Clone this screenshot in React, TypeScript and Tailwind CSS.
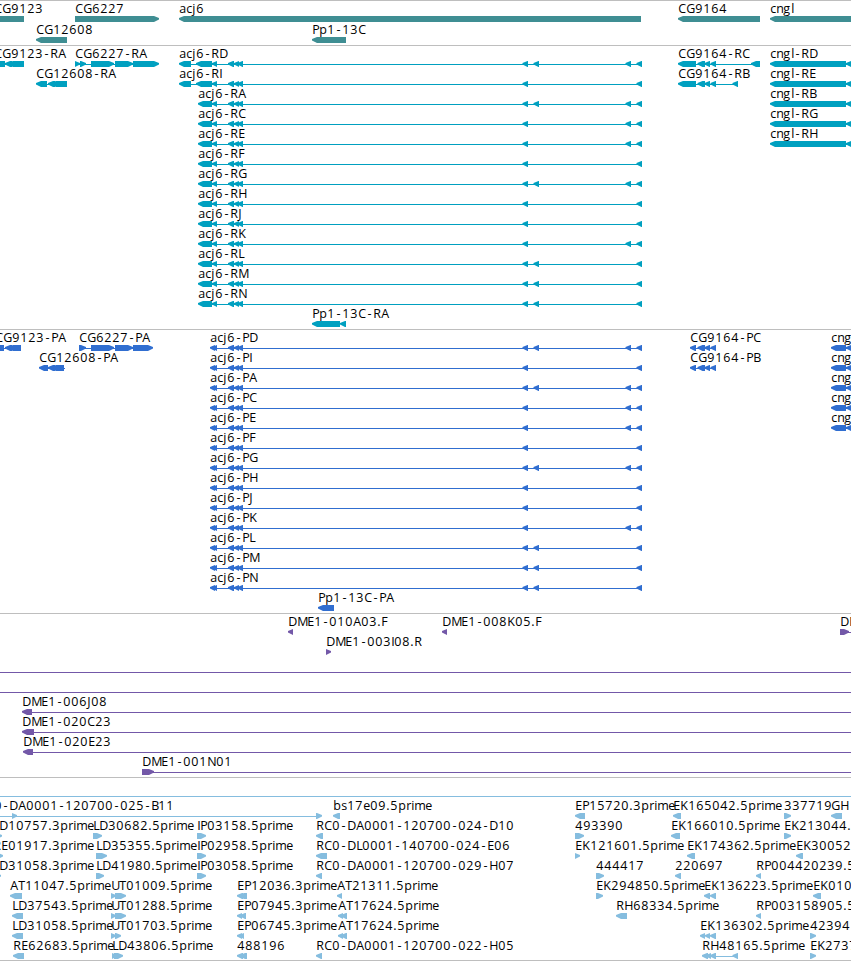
import React from 'react';

type Dir = 'l' | 'r';

interface Feature {
  label?: string;
  x: number; // label origin
  dir?: Dir;
  exons?: number[][]; // [start, end]
  line?: number[];
}

const WIDTH = 851;

// Advance widths of the label font
const ADVANCE: Record<string, number> = {
  a: 7, b: 8, c: 6, e: 7, g: 8, i: 3, j: 4, l: 3, m: 11, n: 7, p: 8, r: 5, s: 6,
  A: 8, B: 7, C: 8, D: 9, E: 7, F: 7, G: 9, H: 9, I: 3, J: 4, K: 8, L: 6, M: 10,
  N: 9, P: 7, R: 8, T: 7, U: 8, '-': 7, '.': 4,
};

const glyphPositions = (text: string, start: number) => {
  let x = start;
  return text
    .split('')
    .map((ch) => {
      const at = ch === '-' ? x + 1.5 : x + 0.3;
      x += ADVANCE[ch] ?? 8;
      return at;
    })
    .join(' ');
};

const exonPoints = (s: number, e: number, dir: Dir) => {
  const head = Math.min(5, e - s);
  return dir === 'l'
    ? `${s},17 ${s + head},15 ${e},15 ${e},21 ${s + head},21 ${s},18.5`
    : `${e},17 ${e - head},15 ${s},15 ${s},21 ${e - head},21 ${e},18.5`;
};

const Row = ({ items, height = 20 }: { items: Feature[]; height?: number }) => (
  <svg width={WIDTH} height={height} className="block shrink-0 overflow-visible">
    {items.map((f, i) => (
      <g key={i}>
        {f.line && <rect x={f.line[0]} y={18} width={f.line[1] - f.line[0]} height={1} fill="currentColor" />}
        {f.exons?.map(([s, e], j) => (
          <polygon key={j} points={exonPoints(s, e, f.dir ?? 'l')} fill="currentColor" />
        ))}
        {f.label && (
          <text x={glyphPositions(f.label, f.x)} y={12} className="fill-black">
            {f.label}
          </text>
        )}
      </g>
    ))}
  </svg>
);

const f = (label: string, x: number, dir: Dir, exons: number[][], line?: number[]): Feature => ({ label, x, dir, exons, line });

// Right-hand exons of each acj6 isoform
const A = [522.5, 528];
const B = [533.5, 539];
const C = [625.5, 631];
const D = [636.5, 642];
const acj6Isoforms: [string, number[][]][] = [
  ['D', [A, B, C, D]],
  ['I', [A, D]],
  ['A', [A, B, C, D]],
  ['C', [A, C, D]],
  ['E', [A, C, D]],
  ['F', [A, D]],
  ['G', [A, B, C, D]],
  ['H', [A, D]],
  ['J', [A, D]],
  ['K', [A, C, D]],
  ['L', [A, B, D]],
  ['M', [A, B, D]],
  ['N', [A, B, D]],
];
const acj6Inner = [[228, 234], [234, 239], [237.5, 243]];
const cg9164Inner = [[697.5, 705], [704.5, 710], [710.5, 716]];

const genes: Feature[][] = [
  [
    f('CG9123', -6, 'l', [[-20, 24]]),
    f('CG6227', 75, 'r', [[75, 159]]),
    f('acj6', 179, 'l', [[179, 641]]),
    f('CG9164', 678, 'l', [[678, 760]]),
    f('cngl', 770, 'l', [[770, 900]]),
  ],
  [f('CG12608', 36, 'l', [[36, 67]]), f('Pp1-13C', 312, 'l', [[312, 346]])],
];

const transcripts: Feature[][] = acj6Isoforms.map(([id, right], i) => {
  const start = i < 2 ? 179 : 198;
  const left = i < 2 ? [[179, 191], [196, 212], [212, 217]] : [[198, 212], [212, 217]];
  return [f('acj6-R' + id, start, 'l', [...left, ...acj6Inner, ...right], [start + 3, 640])];
});
transcripts[0].unshift(
  f('CG9123-RA', -6, 'l', [[-20, 5], [5, 12], [8, 24]], [0, 20]),
  f('CG6227-RA', 75, 'r', [[75, 80], [80, 86], [91, 114], [115, 133], [133, 159]], [75, 155]),
);
transcripts[0].push(f('CG9164-RC', 678, 'l', [[678, 696], ...cg9164Inner, [751, 760]], [680, 758]));
transcripts[1].unshift(f('CG12608-RA', 36, 'l', [[36, 47], [48, 55], [51, 67]], [40, 60]));
transcripts[1].push(f('CG9164-RB', 678, 'l', [[678, 696], ...cg9164Inner, [732.5, 738]], [680, 737]));
['D', 'E', 'B', 'G', 'H'].forEach((id, i) => {
  transcripts[i].push(f('cngl-R' + id, 770, 'l', [[770, 846], [846, 856]], [800, 851]));
});
transcripts.push([f('Pp1-13C-RA', 312, 'l', [[312, 340], [340, 346]])]);

const proteins: Feature[][] = acj6Isoforms.map(([id, right]) => [
  f('acj6-P' + id, 210, 'l', [[210, 215], [212, 217], ...acj6Inner, ...right], [213, 640]),
]);
proteins[0].unshift(
  f('CG9123-PA', -5, 'l', [[-20, 4], [5, 12], [8, 21]], [0, 20]),
  f('CG6227-PA', 79, 'r', [[79, 86], [91, 114], [115, 133], [133, 153]], [80, 150]),
);
proteins[0].push(f('CG9164-PC', 690, 'l', [[690, 696], ...cg9164Inner], [692, 715]));
proteins[1].unshift(f('CG12608-PA', 39, 'l', [[39, 48], [48, 55], [51, 64]], [40, 65]));
proteins[1].push(f('CG9164-PB', 690, 'l', [[690, 696], ...cg9164Inner], [692, 715]));
['D', 'E', 'B', 'G', 'H'].forEach((id, i) => {
  proteins[i].push(f('cngl-P' + id, 831, 'l', [[831, 846], [846, 856]], [835, 851]));
});
proteins.push([f('Pp1-13C-PA', 318, 'l', [[318, 334]])]);

const bacs: Feature[][] = [
  [
    f('DME1-010A03.F', 288, 'l', [[288, 293]]),
    f('DME1-008K05.F', 442, 'l', [[442, 447]]),
    f('DME1', 840, 'r', [[840, 849]], [842, 851]),
  ],
  [f('DME1-003I08.R', 326, 'r', [[326, 331]])],
  [{ x: 0, line: [0, WIDTH] }],
  [{ x: 0, line: [0, WIDTH] }],
  [f('DME1-006J08', 22, 'l', [[22, 32]], [30, WIDTH])],
  [f('DME1-020C23', 22, 'l', [[22, 34]], [30, WIDTH])],
  [f('DME1-020E23', 23, 'l', [[23, 33]], [30, WIDTH])],
  [f('DME1-001N01', 142, 'r', [[142, 154]], [150, WIDTH])],
];

const ests: Feature[][] = [
  [{ x: 0, line: [0, WIDTH] }],
  [
    f('RC0-DA0001-120700-025-B11', -22, 'r', [[12, 17], [316, 322]], [0, 320]),
    f('bs17e09.5prime', 333, 'l', [[333, 340]]),
    f('EP15720.3prime', 575, 'l', [[575, 585]]),
    f('EK165042.5prime', 673, 'l', [[673, 681]]),
    f('337719', 784, 'r', [[784, 791]]),
    f('GH', 831, 'l', [[831, 842]]),
  ],
  [
    f('LD10757.3prime', -7, 'r', [[-4, 2]]),
    f('LD30682.5prime', 93, 'r', [[93, 102]]),
    f('IP03158.5prime', 197, 'r', [[197, 206]]),
    f('RC0-DA0001-120700-024-D10', 316, 'l', [[316, 323]]),
    f('493390', 575, 'r', [[575, 584]]),
    f('EK166010.5prime', 671, 'l', [[671, 680]]),
    f('EK213044.5prime', 784, 'r', [[784, 791]]),
  ],
  [
    f('RE01917.3prime', -7, 'r', [[-4, 3]]),
    f('LD35355.5prime', 96, 'r', [[96, 107]]),
    f('IP02958.5prime', 197, 'r', [[197, 206]]),
    f('RC0-DL0001-140700-024-E06', 316, 'l', [[316, 327]]),
    f('EK121601.5prime', 575, 'r', [[575, 580]]),
    f('EK174362.5prime', 687, 'l', [[687, 695]]),
    f('EK30052', 796, 'l', [[796, 803]]),
  ],
  [
    f('LD31058.3prime', -7, 'r', [[-4, 1]]),
    f('LD41980.5prime', 96, 'r', [[96, 104]]),
    f('IP03058.5prime', 197, 'r', [[197, 206]]),
    f('RC0-DA0001-120700-029-H07', 316, 'l', [[316, 322]]),
    f('444417', 596, 'r', [[596, 604]]),
    f('220697', 675, 'l', [[675, 681]]),
    f('RP004420239.5prime', 756, 'l', [[756, 761]]),
  ],
  [
    f('AT11047.5prime', 10, 'l', [[10, 22]]),
    f('UT01009.5prime', 111, 'r', [[111, 116], [115, 126]]),
    f('EP12036.3prime', 237, 'l', [[237, 243], [239, 247]]),
    f('AT21311.5prime', 337, 'l', [[337, 342]]),
    f('EK294850.5prime', 596, 'r', [[596, 603]]),
    f('EK136223.5prime', 704, 'l', [[704, 710], [710, 716]]),
    f('EK010', 813, 'l', [[813, 821]]),
  ],
  [
    f('LD37543.5prime', 12, 'l', [[12, 23]]),
    f('UT01288.5prime', 111, 'r', [[111, 116], [115, 126]]),
    f('EP07945.3prime', 237, 'l', [[237, 242], [240, 246]]),
    f('AT17624.5prime', 338, 'l', [[338, 343], [341, 347]]),
    f('RH68334.5prime', 616, 'l', [[616, 627]]),
    f('RP003158905.5prime', 756, 'l', [[756, 761]]),
  ],
  [
    f('LD31058.5prime', 12, 'l', [[12, 23]]),
    f('UT01703.5prime', 111, 'r', [[111, 116], [115, 121]]),
    f('EP06745.3prime', 237, 'l', [[237, 242], [239, 244]]),
    f('AT17624.5prime', 338, 'l', [[338, 343], [341, 347]]),
    f('EK136302.5prime', 700, 'l', [[700, 705], [705, 710], [710, 716]]),
    f('42394', 810, 'r', [[810, 816]]),
  ],
  [
    f('RE62683.5prime', 13, 'l', [[13, 24]]),
    f('LD43806.5prime', 112, 'r', [[112, 117], [114, 123]]),
    f('488196', 237, 'l', [[237, 243], [240, 247]]),
    f('RC0-DA0001-120700-022-H05', 316, 'l', [[316, 322]]),
    f('RH48165.5prime', 702, 'l', [[702, 708], [706, 711], [710, 716], [732.5, 738]], [705, 737]),
    f('EK2737', 810, 'r', [[810, 816]]),
  ],
];

const Track = ({ rows, className, rowHeight }: { rows: Feature[][]; className: string; rowHeight?: number }) => (
  <section className={`flex flex-col overflow-hidden border-t border-[#bebebe] ${className}`}>
    {rows.map((items, i) => (
      <Row key={i} items={items} height={rowHeight} />
    ))}
  </section>
);

const App: React.FC = () => (
  <main className="flex h-[961px] w-[851px] flex-col overflow-hidden border-b border-[#bebebe] bg-white font-['Open_Sans',sans-serif] text-[12.5px]">
    <Track rows={genes} rowHeight={21} className="h-[45px] text-[#3f8e93]" />
    <Track rows={transcripts} className="h-[284px] text-[#00a0c0]" />
    <Track rows={proteins} className="h-[284px] text-[#306ed0]" />
    <Track rows={bacs} className="h-[164px] text-[#7358a8]" />
    <Track rows={ests} className="h-[183px] text-[#85bddf]" />
  </main>
);

export default App;
